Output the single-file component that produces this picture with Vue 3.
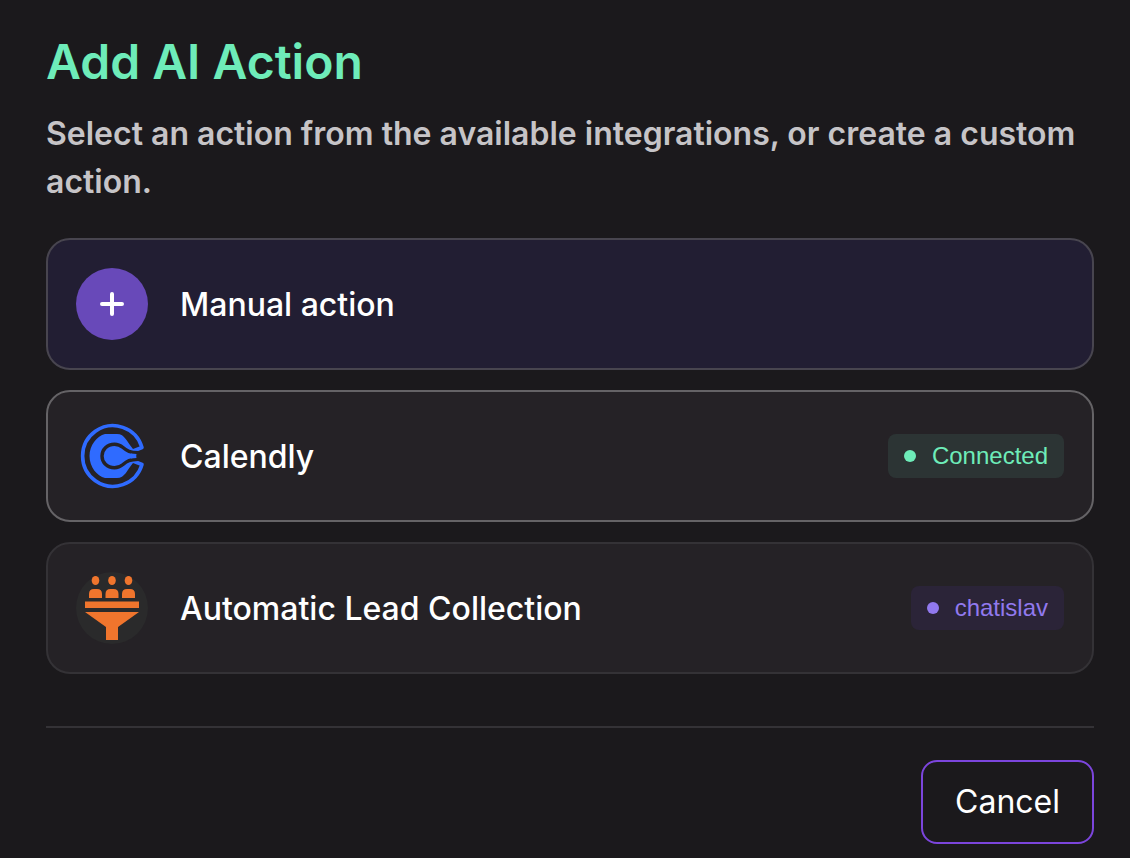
<script setup>
const actions = [
  { id: 'manual', label: 'Manual action' },
  { id: 'calendly', label: 'Calendly', badge: 'Connected' },
  { id: 'leads', label: 'Automatic Lead Collection', badge: 'chatislav' },
]
</script>

<template>
  <main class="dialog" role="dialog" aria-labelledby="dialog-title">
    <h1 id="dialog-title">Add AI Action</h1>
    <p class="intro">Select an action from the available integrations, or create a custom action.</p>

    <div class="actions">
      <button v-for="action in actions" :key="action.id" type="button" class="action" :class="action.id">
        <span class="icon">
          <svg v-if="action.id === 'manual'" viewBox="0 0 72 72" aria-hidden="true">
            <path d="M36 26v20M26 36h20" fill="none" stroke="#fff" stroke-width="4" stroke-linecap="round" />
          </svg>
          <svg v-else-if="action.id === 'calendly'" viewBox="0 0 72 72" aria-hidden="true">
            <path d="M57 31 L66 27.500 A30.300 30.300 0 1 0 66 44.500 L57 41" fill="none" stroke="#2f6bff" stroke-width="3.600" stroke-linejoin="round" />
            <path d="M29 14 H41 C49 14 51 22 57 29 V43 C51 50 49 58 41 58 H29 C21 56 13.500 47 13.500 36 S21 16 29 14Z" fill="#2f6bff" />
            <path d="M62 32.800 C54 32.500 51 31 47 27.500 C44 25 41 24.200 38.500 24.200 C31 24.200 26 29.500 26 36 S31 47.800 38.500 47.800 C41 47.800 44 47 47 44.500 C51 41 54 39.500 62 39.200Z" fill="#2f6bff" stroke="#252226" stroke-width="3.400" />
            <path d="M55 33.600 L60.500 34 L59.500 36 L60.500 38 L55 38.400Z" fill="#2f6bff" />
          </svg>
          <svg v-else viewBox="0 0 72 72" aria-hidden="true">
            <g fill="#f0752d">
              <ellipse cx="19.500" cy="8.500" rx="3.800" ry="4.600" />
              <ellipse cx="36" cy="8.500" rx="3.800" ry="4.600" />
              <ellipse cx="52.500" cy="8.500" rx="3.800" ry="4.600" />
              <path d="M13 26v-4q0-5 5-5h3q5 0 5 5v4zM29.500 26v-4q0-5 5-5h3q5 0 5 5v4zM46 26v-4q0-5 5-5h3q5 0 5 5v4z" />
              <path d="M9 29.500h54V36H9zM9 40h54L42 55v13H30V55z" />
            </g>
          </svg>
        </span>
        <span class="label">{{ action.label }}</span>
        <span v-if="action.badge" class="badge"><i class="dot"></i>{{ action.badge }}</span>
      </button>
    </div>

    <footer>
      <button type="button" class="cancel">Cancel</button>
    </footer>
  </main>
</template>

<style>
body {
  background: #1b191c;
}
</style>

<style scoped>
.dialog {
  box-sizing: border-box;
  padding: 32px 36px 14px 46px;
  color: #fff;
  font-family: Inter, sans-serif;
}
h1 {
  margin: 0;
  color: #6eecb9;
  font-size: 48px;
  font-weight: 600;
  line-height: 60px;
}
.intro {
  margin: 18px 0 32px;
  color: #c6c4c7;
  font-size: 32px;
  font-weight: 600;
  line-height: 48px;
}
.actions {
  display: flex;
  flex-direction: column;
  gap: 20px;
}
.action {
  display: flex;
  align-items: center;
  gap: 32px;
  padding: 28px;
  border: 2px solid #343236;
  border-radius: 24px;
  background: #252226;
  color: #fff;
  font-family: inherit;
  font-size: 32px;
  font-weight: 500;
  line-height: 40px;
  text-align: left;
  cursor: pointer;
}
.manual {
  border-color: #48454f;
  background: #221e33;
}
.calendly {
  border-color: #656366;
}
.icon {
  flex: none;
  width: 72px;
  height: 72px;
  border-radius: 50%;
}
.icon svg {
  display: block;
}
.manual .icon {
  background: #6849b9;
}
.leads .icon {
  background: #2a2a2b;
}
.label {
  flex: 1;
  padding-top: 2px;
}
.badge {
  display: flex;
  align-items: center;
  padding: 0 16px;
  border-radius: 8px;
  background: #2c3434;
  color: #6eecb9;
  font-family: "Liberation Sans", Arial, sans-serif;
  font-size: 24px;
  font-weight: 400;
  line-height: 44px;
}
.leads .badge {
  background: #2b2438;
  color: #9179ee;
}
.dot {
  width: 12px;
  height: 12px;
  margin-right: 16px;
  border-radius: 50%;
  background: currentColor;
}
footer {
  display: flex;
  justify-content: flex-end;
  margin-top: 52px;
  padding-top: 32px;
  border-top: 2px solid #343236;
}
.cancel {
  padding: 20px 32px;
  border: 2px solid #7c45dc;
  border-radius: 16px;
  background: transparent;
  color: #fff;
  font-family: inherit;
  font-size: 32px;
  line-height: 40px;
  cursor: pointer;
}
</style>
